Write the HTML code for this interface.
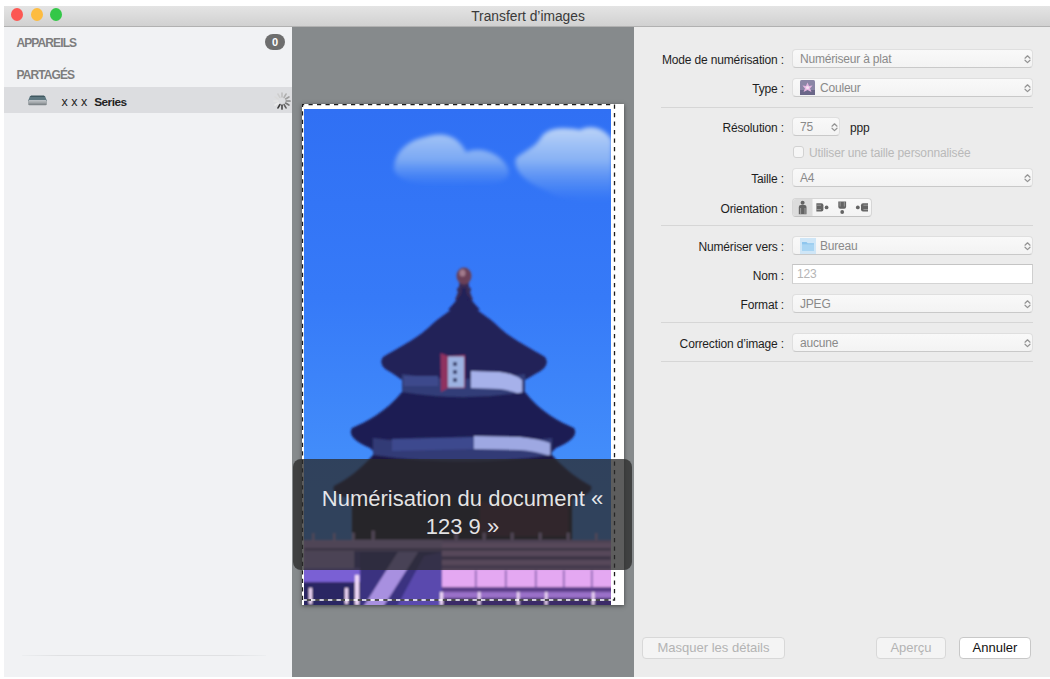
<!DOCTYPE html>
<html lang="fr">
<head>
<meta charset="utf-8">
<title>Transfert d'images</title>
<style>
*{box-sizing:border-box;margin:0;padding:0}
html,body{width:1050px;height:679px;overflow:hidden;background:#fff}
body{position:relative;font-family:"Liberation Sans",sans-serif;font-size:13px;color:#222}
#win{position:absolute;left:4px;top:6px;width:1046px;height:671px;background:#ececec;overflow:hidden}
#titlebar{position:absolute;left:0;top:0;width:100%;height:21px;background:linear-gradient(#e4e4e4,#d1d1d1);border-bottom:1px solid #b1b1b1}
#title{position:absolute;left:1px;width:100%;top:3px;text-align:center;font-size:13.8px;color:#3a3a3a}
.tl{position:absolute;top:2px;width:12px;height:13px;border-radius:50%}
#sidebar{position:absolute;left:0;top:21px;width:288px;height:650px;background:#f1f2f4}
.sh{position:absolute;left:12.5px;font-size:12px;font-weight:bold;color:#7d7d7d;letter-spacing:-.9px}
#badge{position:absolute;left:261px;top:7px;width:20px;height:16px;border-radius:8px;background:#6e6e6e;color:#fff;font-size:11px;font-weight:bold;text-align:center;line-height:16px}
#selrow{position:absolute;left:0;top:60px;width:288px;height:26px;background:#dcdde0}
#selrow span{position:absolute;left:57.5px;top:7.5px;font-size:12.5px;color:#222;white-space:pre}
#selrow b{font-size:11.8px;letter-spacing:-.5px}
#sline{position:absolute;left:18px;top:628px;width:244px;height:1px;background:linear-gradient(90deg,#eceef0,#e0e1e3 15%,#e0e1e3 85%,#eceef0)}
#mid{position:absolute;left:288px;top:21px;width:342px;height:650px;background:#868a8c}
#page{position:absolute;left:10px;top:77px;width:322px;height:501px;background:#fff;box-shadow:0 1px 4px rgba(0,0,0,.5)}
#page svg{position:absolute;left:0;top:0}
#overlay{position:absolute;left:1px;top:432px;width:339px;height:111px;border-radius:8px;background:rgba(42,42,42,.76);color:rgba(255,255,255,.88);text-align:center;font-size:22px;line-height:27.5px;padding-top:26.3px}
#right{position:absolute;left:630px;top:21px;width:416px;height:650px;background:#ececec}
.lbl{position:absolute;right:266px;font-size:12px;letter-spacing:-.15px;color:#1e1e1e;white-space:nowrap}
.sel{position:absolute;left:158px;width:241px;height:19px;border-radius:4px;background:linear-gradient(#f9f9f9,#f3f3f3);border:1px solid #dfdfdf;border-bottom-color:#c9c9c9;font-size:12px;letter-spacing:-.2px;color:#8a8a8a;line-height:18px;padding-left:7px;white-space:nowrap}
.sel svg.chev{position:absolute;right:0.5px;top:3px}
.sel svg.ic{position:absolute;left:7px;top:1px}
#cb{position:absolute;left:159px;top:119px;width:11px;height:12px;border-radius:3px;background:#f6f6f6;border:1px solid #d2d2d2}
#seg{position:absolute;left:158px;top:171px;width:80px;height:19px;border-radius:4px;background:linear-gradient(#f9f9f9,#f3f3f3);border:1px solid #d6d6d6;border-bottom-color:#c2c2c2;overflow:hidden}
#seg svg{position:absolute;left:-1px;top:-1px}
.hr{position:absolute;left:27px;width:372px;height:1px;background:#d6d6d6}
.btn{position:absolute;top:610px;height:22px;border-radius:4px;background:#f4f4f4;border:1px solid #d8d8d8;font-size:13px;color:#b3b3b3;text-align:center;line-height:20px}
</style>
</head>
<body>
<div id="win">
  <div id="titlebar">
    <div class="tl" style="left:7px;background:#fc5753"></div>
    <div class="tl" style="left:26.6px;background:#fdbc40"></div>
    <div class="tl" style="left:46px;background:#33c748"></div>
    <div id="title">Transfert d’images</div>
  </div>
  <div id="sidebar">
    <div class="sh" style="top:9px">APPAREILS</div>
    <div id="badge">0</div>
    <div class="sh" style="top:40.5px">PARTAGÉS</div>
    <div id="selrow"><svg style="position:absolute;left:23px;top:7px" width="21" height="12" viewBox="27 94 21 12"><path d="M30,96 L45,96 L47,101 L28,101Z" fill="#5d7780"/><path d="M31,95.5 L44,95.5 L45,97 L30,97Z" fill="#3f5860"/><rect x="28" y="100.3" width="19" height="4.6" rx="1.2" fill="#a4a9ad"/><rect x="28.5" y="103.6" width="18" height="1.6" rx=".8" fill="#7f868a"/><rect x="29" y="100.3" width="17" height="1" fill="#cdd1d4"/></svg><svg style="position:absolute;left:268px;top:4px" width="20" height="20" viewBox="271.6 90 20 20"><g stroke-width="1.7" stroke-linecap="round"><line x1="279.5" y1="103.6" x2="277.6" y2="106.9" stroke="#3c3c3c"/><line x1="281.6" y1="104.2" x2="281.6" y2="108.0" stroke="#4e4e4e"/><line x1="283.7" y1="103.6" x2="285.6" y2="106.9" stroke="#626262"/><line x1="285.2" y1="102.1" x2="288.5" y2="104.0" stroke="#767676"/><line x1="285.8" y1="100.0" x2="289.6" y2="100.0" stroke="#8a8a8a"/><line x1="285.2" y1="97.9" x2="288.5" y2="96.0" stroke="#9e9e9e"/><line x1="283.7" y1="96.4" x2="285.6" y2="93.1" stroke="#b0b0b0"/><line x1="281.6" y1="95.8" x2="281.6" y2="92.0" stroke="#c0c0c0"/><line x1="279.5" y1="96.4" x2="277.6" y2="93.1" stroke="#cecece"/><line x1="278.0" y1="97.9" x2="274.7" y2="96.0" stroke="#dadada"/><line x1="277.4" y1="100.0" x2="273.6" y2="100.0" stroke="#e4e4e4"/><line x1="278.0" y1="102.1" x2="274.7" y2="104.0" stroke="#ececec"/></g></svg><span>x x x  <b>Series</b></span></div>
    <div id="sline"></div>
  </div>
  <div id="mid">
    <div id="page"><!--IMGS--><svg width="322" height="501" viewBox="302 104 322 501">
<defs>
<linearGradient id="sky" x1="0" y1="0" x2="0" y2="1"><stop offset="0" stop-color="#3070f4"/><stop offset=".38" stop-color="#367af8"/><stop offset=".69" stop-color="#428cfa"/><stop offset="1" stop-color="#4a90f8"/></linearGradient>
<linearGradient id="cl1" x1="0" y1="0" x2="0" y2="1"><stop offset="0" stop-color="#a9c8f6" stop-opacity=".95"/><stop offset=".5" stop-color="#8db6f4" stop-opacity=".8"/><stop offset="1" stop-color="#6aa0f4" stop-opacity="0"/></linearGradient>
<linearGradient id="cl2" x1="0" y1="0" x2="0" y2="1"><stop offset="0" stop-color="#bcd4f8" stop-opacity="1"/><stop offset=".45" stop-color="#96bcf5" stop-opacity=".85"/><stop offset="1" stop-color="#6aa0f4" stop-opacity="0"/></linearGradient>
<filter id="b2" x="-10%" y="-10%" width="120%" height="120%"><feGaussianBlur stdDeviation="2.2"/></filter>
<filter id="b4" x="-20%" y="-20%" width="140%" height="140%"><feGaussianBlur stdDeviation="4"/></filter>
<filter id="b1" x="-10%" y="-10%" width="120%" height="120%"><feGaussianBlur stdDeviation="0.8"/></filter>
<clipPath id="imgclip"><rect x="304" y="109" width="307" height="496"/></clipPath>
</defs>
<rect x="302" y="104" width="322" height="501" fill="#fff"/>
<g clip-path="url(#imgclip)">
<rect x="304" y="109" width="307" height="496" fill="url(#sky)"/>
<!-- clouds -->
<g filter="url(#b2)">
<path d="M394,170 C394,150 410,140 425,137 C445,130 460,138 466,152 C480,146 500,152 508,168 C512,180 500,186 470,184 C440,188 400,186 394,170Z" fill="url(#cl1)"/>
<path d="M516,158 C525,150 535,148 542,136 C550,126 570,128 580,130 C590,124 605,128 612,140 L612,200 C590,204 560,200 545,190 C530,184 512,172 516,158Z" fill="url(#cl2)"/>
</g>
<g filter="url(#b1)">
<!-- finial -->
<path d="M459.5,282 h9 l.5,5 q3.5,2 1,5 l3,8 h-18 l3,-8 q-2.5,-3 1,-5Z" fill="#372a55"/>
<ellipse cx="464" cy="276" rx="7.5" ry="8.5" fill="#6b4058"/>
<ellipse cx="462.5" cy="273" rx="3" ry="3.5" fill="#a27a8c"/>
<!-- top roof -->
<path d="M460,296 Q463,292 461.5,288 L466.5,288 Q465,292 468,296 L480,310 L448,310Z" fill="#242058"/>
<path d="M464,294 C460,304 448,312 437,320 C428,328 424,332 418,336 C408,343 398,348 383,357 Q377,366 392,373 L402,380 L525,380 L537,373 Q551,366 545,357 C530,348 520,343 510,336 C504,332 500,328 491,320 C480,312 468,304 464,294Z" fill="#242058"/>
<!-- band 1 -->
<path d="M402,374 L402,394 Q464,404 525,394 L525,374 Q464,384 402,374Z" fill="#333c78"/>
<path d="M471,371 L500,372 Q515,374 522,380 L522,395 Q510,390 500,389 L471,388Z" fill="#a6b1ea"/>
<path d="M404,376 h34 v10 h-34z" fill="#3d4a8c"/>
<path d="M440.5,353 L448,356 L465,355 L465,388 L448,388 L441,392Z" fill="#8f3260"/>
<rect x="448" y="356.5" width="16" height="31" fill="#9db3e2"/>
<path d="M453,362 h4 v4 h-4z M453,370 h4 v4 h-4z M453,378 h4 v4 h-4z" fill="#3a4270"/>
<!-- middle roof -->
<path d="M402,392 Q464,402 525,392 C540,412 560,422 574,428 Q580,438 556,448 L552,452 L374,452 L370,448 Q346,438 352,428 C366,422 386,412 402,392Z" fill="#1f1c52"/>
<!-- band 2 -->
<path d="M373,438 L373,456 Q464,468 552,456 L552,438 Q464,450 373,438Z" fill="#323a76"/>
<path d="M392,439 L474,437 L474,449 L392,451Z" fill="#3d4a8e"/>
<path d="M474,436 L520,437 Q540,439 550,443 L550,456 Q535,451 520,450 L474,449Z" fill="#9ea8e2"/>
<!-- third roof -->
<path d="M373,455 Q464,468 552,455 C565,470 580,480 591,486 Q594,494 572,499 L352,499 Q330,494 334,486 C346,480 360,470 373,455Z" fill="#1b1942"/>
<!-- body -->
<rect x="352" y="497" width="220" height="46" fill="#1e1428"/>
<rect x="480" y="502" width="88" height="34" fill="#4a1c30"/>
<!-- terrace -->
<rect x="296" y="540" width="325" height="72" fill="#e4a8f2"/>
<rect x="304" y="540" width="138" height="11" fill="#c49ce2"/>
<g fill="#d0a4e6"><rect x="312" y="533" width="2.5" height="8"/><rect x="333" y="533" width="2.5" height="8"/><rect x="352" y="533" width="2.5" height="8"/><rect x="372" y="531" width="2.5" height="10"/><rect x="455" y="533" width="2.5" height="8"/><rect x="483" y="533" width="2.5" height="8"/><rect x="511" y="533" width="2.5" height="8"/><rect x="539" y="533" width="2.5" height="8"/><rect x="567" y="533" width="2.5" height="8"/><rect x="595" y="533" width="2.5" height="8"/></g>
<rect x="304" y="551" width="138" height="54" fill="#4a3c98"/>
<rect x="304" y="551" width="50" height="17" fill="#b494dc"/>
<path d="M296,568 h64 v14 h-64z" fill="#7a60d4"/>
<path d="M296,582 h68 v30 h-68z" fill="#2c2664"/>
<path d="M360,552 h82 v60 h-82z" fill="#3a3080"/>
<path d="M398,552 L418,552 L380,612 L360,612Z" fill="#a890e0"/>
<path d="M424,556 L442,552 L442,612 L394,612Z" fill="#5a4aae"/>
<rect x="442" y="540" width="169" height="3" fill="#b88ad4"/>
<rect x="304" y="548" width="307" height="2.5" fill="#6a5090"/>
<rect x="442" y="556" width="169" height="4" fill="#7a58a0"/>
<rect x="442" y="565" width="169" height="4" fill="#9a70c0"/>
<rect x="442" y="587" width="179" height="5" fill="#5a3c88"/>
<rect x="442" y="592" width="179" height="6" fill="#9a70c8"/>
<rect x="442" y="598" width="179" height="14" fill="#3a2c68"/>
<g fill="#f0d8f8"><rect x="309" y="588" width="3" height="16"/><rect x="345" y="588" width="3" height="16"/><rect x="355" y="575" width="4" height="30"/><rect x="440" y="592" width="3" height="13"/><rect x="478" y="592" width="2.5" height="13"/><rect x="517" y="592" width="2.5" height="13"/><rect x="545" y="592" width="2.5" height="13"/><rect x="592" y="592" width="2.5" height="13"/></g>
<g fill="#7a58a8"><rect x="475" y="570" width="1.5" height="18"/><rect x="505" y="570" width="1.5" height="18"/><rect x="535" y="570" width="1.5" height="18"/><rect x="563" y="570" width="1.5" height="18"/><rect x="591" y="570" width="1.5" height="18"/></g>
</g>
</g>
<!-- marching ants -->
<path d="M302.5,600 V104.5 H614.5 V600 Z" fill="none" stroke="#fff" stroke-width="1.3"/>
<path d="M302.5,600 V104.5 H614.5 V600 Z" fill="none" stroke="#1c1c1c" stroke-width="1.3" stroke-dasharray="4.2 4.3"/>
</svg>
<!--IMGE--></div>
    <div id="overlay">Numérisation du document «<br>123 9 »</div>
  </div>
  <div id="right">
    <div class="lbl" style="top:26px">Mode de numérisation :</div>
    <div class="sel" style="top:22px">Numériseur à plat<svg class="chev" width="9" height="13" viewBox="0 0 9 13"><path d="M2,5.2 L4.5,2.8 L7,5.2 M2,7.2 L4.5,9.6 L7,7.2" fill="none" stroke="#939393" stroke-width="1.2" stroke-linecap="round" stroke-linejoin="round"/></svg></div>
    <div class="lbl" style="top:55px">Type :</div>
    <div class="sel" style="top:51px"><svg class="ic" width="15" height="15" viewBox="0 0 15 15"><defs><filter id="fb"><feGaussianBlur stdDeviation=".7"/></filter></defs><rect x="0" y="0" width="15" height="15" rx="1.5" fill="#8b86a6"/><rect x="0" y="10" width="15" height="5" fill="#6a6688"/><path d="M7.5,2.5 L9,6 L12.5,5.5 L10,8.5 L11.5,12 L7.5,10 L3.5,12 L5,8.5 L2.5,5.5 L6,6Z" fill="#e6b6e2" filter="url(#fb)"/><circle cx="7.5" cy="7.5" r="1.6" fill="#f4e2f2" filter="url(#fb)"/></svg><span style="margin-left:20px">Couleur</span><svg class="chev" width="9" height="13" viewBox="0 0 9 13"><path d="M2,5.2 L4.5,2.8 L7,5.2 M2,7.2 L4.5,9.6 L7,7.2" fill="none" stroke="#939393" stroke-width="1.2" stroke-linecap="round" stroke-linejoin="round"/></svg></div>
    <div class="hr" style="top:80px"></div>
    <div class="lbl" style="top:94px">Résolution :</div>
    <div class="sel" style="top:90px;width:48px">75<svg class="chev" width="9" height="13" viewBox="0 0 9 13"><path d="M2,5.2 L4.5,2.8 L7,5.2 M2,7.2 L4.5,9.6 L7,7.2" fill="none" stroke="#939393" stroke-width="1.2" stroke-linecap="round" stroke-linejoin="round"/></svg></div>
    <div class="lbl" style="top:94px;right:auto;left:216px">ppp</div>
    <div id="cb"></div>
    <div class="lbl" style="top:119px;right:auto;left:175px;color:#b9b9b9;letter-spacing:-.14px">Utiliser une taille personnalisée</div>
    <div class="lbl" style="top:145px">Taille :</div>
    <div class="sel" style="top:141px">A4<svg class="chev" width="9" height="13" viewBox="0 0 9 13"><path d="M2,5.2 L4.5,2.8 L7,5.2 M2,7.2 L4.5,9.6 L7,7.2" fill="none" stroke="#939393" stroke-width="1.2" stroke-linecap="round" stroke-linejoin="round"/></svg></div>
    <div class="lbl" style="top:175px">Orientation :</div>
    <div id="seg"><svg width="80" height="19" viewBox="792 198 80 19">
<rect x="792" y="198" width="20.5" height="19" fill="#dcdcdc"/>
<g fill="#646464">
<circle cx="802.6" cy="202.8" r="2"/><path d="M798.8,207 q0,-2 2,-2 h3.7 q2,0 2,2 V214.3 h-7.7Z"/>
<circle cx="826.6" cy="207.4" r="1.9"/><path d="M816.4,203.3 h5 q2,0 2,2 v4.2 q0,2 -2,2 h-5Z"/>
<circle cx="842.2" cy="212" r="1.9"/><path d="M838.3,201.4 h7.8 v5.4 q0,2 -2,2 h-3.8 q-2,0 -2,-2Z"/>
<circle cx="857.8" cy="207.4" r="1.9"/><path d="M868,203.3 h-5 q-2,0 -2,2 v4.2 q0,2 2,2 h5Z"/>
</g>
<g stroke="#b4b4b4" stroke-width=".7" fill="none">
<path d="M800.6,208 V214.3 M805,208 V214.3"/>
<path d="M816.4,205.2 H821 M816.4,209.6 H821"/>
<path d="M840.1,201.4 V206.5 M844.3,201.4 V206.5"/>
<path d="M868,205.2 H863.4 M868,209.6 H863.4"/>
</g></svg></div>
    <div class="hr" style="top:198px"></div>
    <div class="lbl" style="top:213px">Numériser vers :</div>
    <div class="sel" style="top:209px"><svg class="ic" width="16" height="16" viewBox="0 0 16 16"><rect x="0" y="0" width="16" height="16" fill="#cfe6f7"/><path d="M2,4 h4.5 l1.2,1.3 H14 V13 H2Z" fill="#8ec6ee"/><rect x="2" y="6.3" width="12" height="6.7" fill="#a9d5f3"/></svg><span style="margin-left:20px">Bureau</span><svg class="chev" width="9" height="13" viewBox="0 0 9 13"><path d="M2,5.2 L4.5,2.8 L7,5.2 M2,7.2 L4.5,9.6 L7,7.2" fill="none" stroke="#939393" stroke-width="1.2" stroke-linecap="round" stroke-linejoin="round"/></svg></div>
    <div class="lbl" style="top:242px">Nom :</div>
    <div class="sel" style="top:237px;height:20px;border-radius:0;background:#fff;border-color:#c4c4c4 #cfcfcf #d4d4d4;color:#b5b5b5;padding-left:4px;line-height:19px">123</div>
    <div class="lbl" style="top:271px">Format :</div>
    <div class="sel" style="top:267px">JPEG<svg class="chev" width="9" height="13" viewBox="0 0 9 13"><path d="M2,5.2 L4.5,2.8 L7,5.2 M2,7.2 L4.5,9.6 L7,7.2" fill="none" stroke="#939393" stroke-width="1.2" stroke-linecap="round" stroke-linejoin="round"/></svg></div>
    <div class="hr" style="top:295px"></div>
    <div class="lbl" style="top:310px">Correction d’image :</div>
    <div class="sel" style="top:306px">aucune<svg class="chev" width="9" height="13" viewBox="0 0 9 13"><path d="M2,5.2 L4.5,2.8 L7,5.2 M2,7.2 L4.5,9.6 L7,7.2" fill="none" stroke="#939393" stroke-width="1.2" stroke-linecap="round" stroke-linejoin="round"/></svg></div>
    <div class="hr" style="top:334px"></div>
    <div class="btn" style="left:8px;width:143px">Masquer les détails</div>
    <div class="btn" style="left:242px;width:70px">Aperçu</div>
    <div class="btn" style="left:325px;width:72px;color:#111;background:#fff;border-color:#c8c8c8">Annuler</div>
  </div>
</div>
</body>
</html>
